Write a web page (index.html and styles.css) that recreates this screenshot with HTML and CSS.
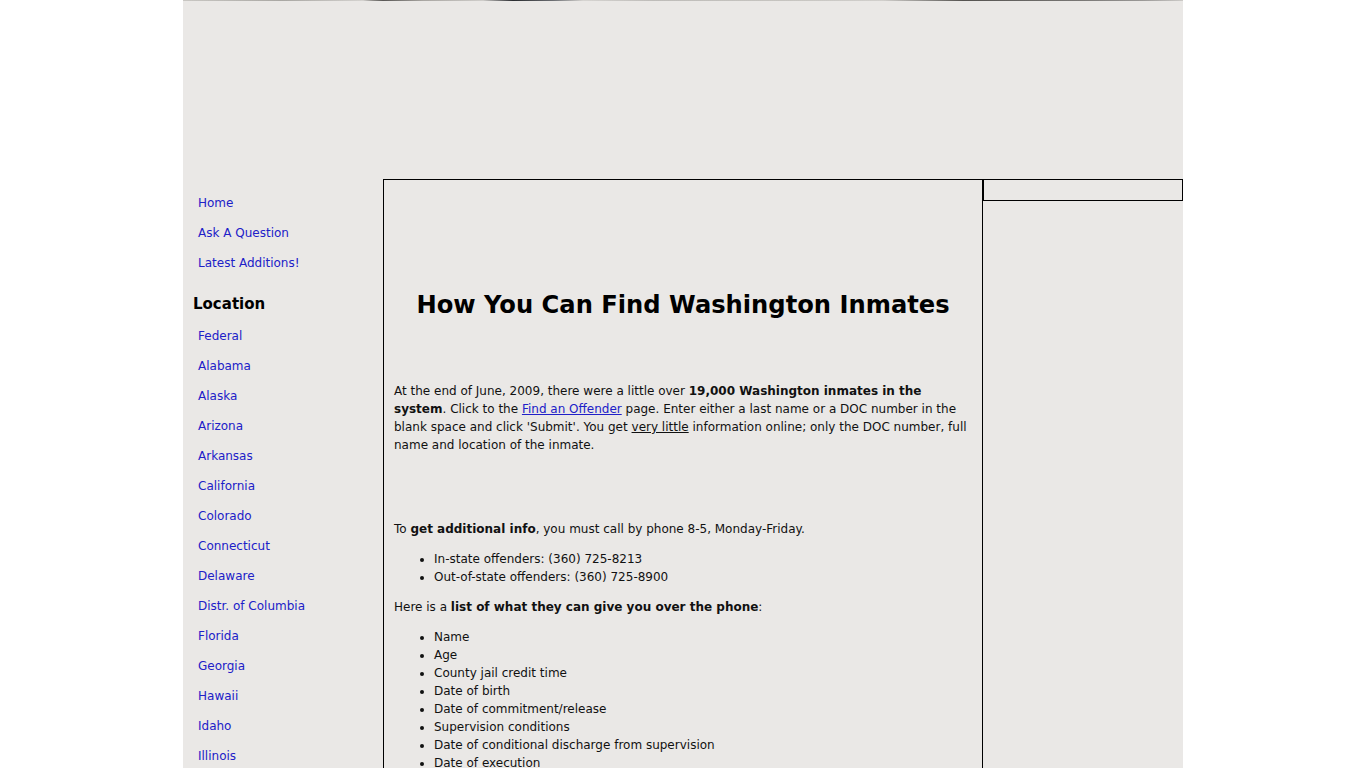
FILE: index.html
```html
<!DOCTYPE html>
<html>
<head>
<meta charset="utf-8">
<title>How You Can Find Washington Inmates</title>
<link rel="stylesheet" href="styles.css">
</head>
<body>
<div class="page">
  <div class="header">
    <div class="photo-strip"></div>
  </div>
  <div class="columns">
    <div class="nav">
      <ul class="nav-list">
        <li><a href="#">Home</a></li>
        <li><a href="#">Ask A Question</a></li>
        <li><a href="#">Latest Additions!</a></li>
      </ul>
      <h3 class="nav-title">Location</h3>
      <ul class="nav-list">
        <li><a href="#">Federal</a></li>
        <li><a href="#">Alabama</a></li>
        <li><a href="#">Alaska</a></li>
        <li><a href="#">Arizona</a></li>
        <li><a href="#">Arkansas</a></li>
        <li><a href="#">California</a></li>
        <li><a href="#">Colorado</a></li>
        <li><a href="#">Connecticut</a></li>
        <li><a href="#">Delaware</a></li>
        <li><a href="#">Distr. of Columbia</a></li>
        <li><a href="#">Florida</a></li>
        <li><a href="#">Georgia</a></li>
        <li><a href="#">Hawaii</a></li>
        <li><a href="#">Idaho</a></li>
        <li><a href="#">Illinois</a></li>
        <li><a href="#">Indiana</a></li>
        <li><a href="#">Iowa</a></li>
      </ul>
    </div>
    <div class="main">
      <div class="ad-space"></div>
      <h1 class="title">How You Can Find Washington Inmates</h1>
      <p class="intro">At the end of June, 2009, there were a little over <b>19,000 Washington inmates in the system</b>. Click to the <a href="#" class="inline-link">Find an Offender</a> page. Enter either a last name or a DOC number in the blank space and click 'Submit'. You get <u>very little</u> information online; only the DOC number, full name and location of the inmate.</p>
      <p class="text">To <b>get additional info</b>, you must call by phone 8-5, Monday-Friday.</p>
      <ul class="bullets">
        <li>In-state offenders: (360) 725-8213</li>
        <li>Out-of-state offenders: (360) 725-8900</li>
      </ul>
      <p class="text">Here is a <b>list of what they can give you over the phone</b>:</p>
      <ul class="bullets">
        <li>Name</li>
        <li>Age</li>
        <li>County jail credit time</li>
        <li>Date of birth</li>
        <li>Date of commitment/release</li>
        <li>Supervision conditions</li>
        <li>Date of conditional discharge from supervision</li>
        <li>Date of execution</li>
        <li>Sentence length</li>
        <li>Offense</li>
      </ul>
    </div>
    <div class="side">
      <div class="side-box"></div>
    </div>
  </div>
</div>
</body>
</html>
```
FILE: styles.css
```css
html, body {
  margin: 0;
  padding: 0;
  background: #ffffff;
}
body {
  font-family: "DejaVu Sans", Verdana, sans-serif;
  font-size: 11px;
  color: #111111;
}
.page {
  width: 1000px;
  margin: 0 auto;
  background: #eae8e6;
}
.header {
  height: 179px;
}
.photo-strip {
  height: 1px;
  background: linear-gradient(90deg, #c9c7c3 0%, #a9a7a3 10%, #d4d2cf 18%, #8d8b88 19%, #5a5856 20%, #a9a6a2 24%, #cfcdca 30%, #2a2c30 33%, #6c6e72 37%, #d6d4d1 40%, #bebcb9 47%, #c6c4c0 60%, #d1cfcc 70%, #555350 78%, #7a7876 90%, #9b9997 96%, #cdcbc8 100%);
}
.columns {
  display: flex;
  align-items: flex-start;
}
.nav {
  width: 200px;
  flex: none;
  padding-top: 15px;
}
.nav-list {
  list-style: none;
  margin: 0;
  padding: 0 0 0 15px;
}
.nav-list li {
  height: 30px;
  line-height: 18px;
}
.nav-list a {
  color: #2020c8;
  text-decoration: none;
  font-size: 12px;
}
.nav-title {
  margin: 10px 0 13px 10px;
  font-size: 15px;
  line-height: 20px;
  color: #000;
}
.main {
  width: 600px;
  flex: none;
  border: 1px solid #000;
  box-sizing: border-box;
  padding: 0 10px 40px 10px;
  line-height: 18px;
  font-size: 12px;
}
.ad-space {
  height: 107px;
}
.title {
  margin: 0 0 59px 0;
  text-align: center;
  font-size: 24.2px;
  line-height: 36px;
  color: #000;
}
.intro {
  margin: 0 0 66px 0;
}
.text {
  margin: 12px 0;
}
.bullets {
  margin: 12px 0;
  padding-left: 40px;
}
.inline-link {
  color: #2020c8;
}
.side {
  width: 200px;
  flex: none;
}
.side-box {
  height: 22px;
  border: 1px solid #000;
  box-sizing: border-box;
}
```
